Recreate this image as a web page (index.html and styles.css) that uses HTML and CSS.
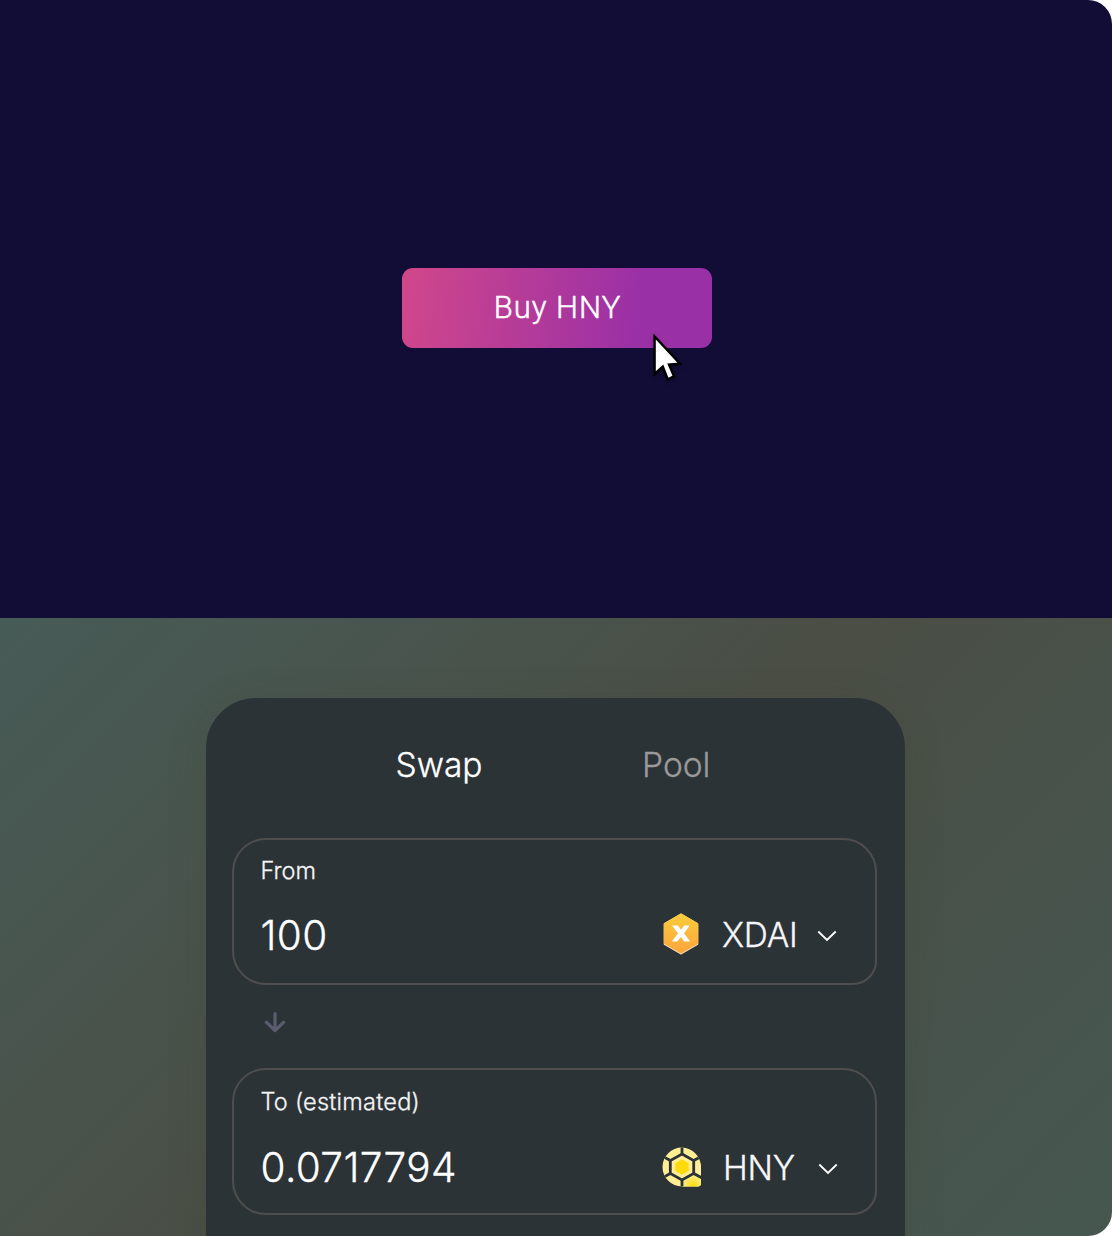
FILE: index.html
```html
<!DOCTYPE html>
<html lang="en">
<head>
<meta charset="utf-8">
<title>Buy HNY</title>
<link rel="stylesheet" href="styles.css">
</head>
<body>
<main class="frame">
  <section class="hero">
    <button class="buy">Buy HNY
      <svg class="cursor" width="36" height="54" viewBox="0 0 36 54">
        <path d="M4.600 5.500V43L12.800 35.500L17.700 48.300L24 45.400L19 33.500L30 32.800Z" fill="#fff" stroke="#000" stroke-width="2.400"/>
      </svg>
    </button>
  </section>
  <section class="exchange">
    <div class="card">
      <nav class="tabs"><span class="tab active">Swap</span><span class="tab">Pool</span></nav>
      <div class="field">
        <div class="label">From</div>
        <div class="row">
          <span class="amount">100</span>
          <span class="token">
            <svg class="logo" width="40" height="44" viewBox="0 0 40 44">
              <defs><linearGradient id="gold" x1="0" y1="0" x2="0" y2="1"><stop offset="0" stop-color="#fbcb3b"/><stop offset="1" stop-color="#fca63c"/></linearGradient></defs>
              <path d="M20 2.800L36 12V32L20 41.200L4 32V12Z" fill="#fde3c3" stroke="#fde3c3" stroke-width="2.500" stroke-linejoin="round"/>
              <path d="M20 2.800L36 12V31L20 40.200L4 31V12Z" fill="url(#gold)" stroke="url(#gold)" stroke-width="2.500" stroke-linejoin="round"/>
              <path d="M11 13.500H17L20 17.800L23.300 13.500H28.800L23 21.300L29.200 29.500H23.200L19.900 25L16.300 29.500H10.700L17 21.500Z" fill="#fff"/>
            </svg>
            <span class="symbol">XDAI</span>
            <svg class="chevron" width="20" height="12" viewBox="0 0 20 12"><path d="M1.300 1.500L10 9.900L18.700 1.500" /></svg>
          </span>
        </div>
      </div>
      <svg class="arrow" width="24" height="24" viewBox="0 0 24 24"><path d="M12 3.500V20M3.500 12.300L12 20.500L20.500 12.300"/></svg>
      <div class="field to">
        <div class="label">To (estimated)</div>
        <div class="row">
          <span class="amount">0.0717794</span>
          <span class="token">
            <svg class="logo" width="40" height="40" viewBox="0 0 40 40">
              <defs>
                <clipPath id="coin"><path d="M20 .5A19.500 19.500 0 0 1 39 20V36Q39 39.500 35.500 39.500H20A19.500 19.500 0 0 1 20 .5Z"/></clipPath>
                <radialGradient id="corner" gradientUnits="userSpaceOnUse" cx="31" cy="38" r="13"><stop offset="0" stop-color="#fddc10"/><stop offset=".4" stop-color="#fde64e"/><stop offset="1" stop-color="#fff0a0"/></radialGradient>
              </defs>
              <g clip-path="url(#coin)">
                <rect width="40" height="40" fill="#ffee93"/>
                <path d="M20 27L40 16V40H20Z" fill="url(#corner)"/>
                <path d="M20 7L31.700 13.500V26.500L20 33L8.300 26.500V13.500Z" fill="#ffee93" stroke="#2c3337" stroke-width="2.800"/>
                <path d="M20 0V7M20 33V40M31.700 13.500L40 9M31.700 26.500L40 31M8.300 13.500L0 9M8.300 26.500L0 31" stroke="#2c3337" stroke-width="2.800"/>
                <path d="M20 13.200L26 16.600V23.400L20 26.800L14 23.400V16.600Z" fill="#ffdb0d" stroke="#ffdb0d" stroke-width="1.500" stroke-linejoin="round"/>
              </g>
            </svg>
            <span class="symbol">HNY</span>
            <svg class="chevron" width="20" height="12" viewBox="0 0 20 12"><path d="M1.300 1.500L10 9.900L18.700 1.500"/></svg>
          </span>
        </div>
      </div>
    </div>
  </section>
</main>
</body>
</html>
```
FILE: styles.css
```css
* { box-sizing: border-box; }
body { margin: 0; background: #fff; font-family: Inter, "Liberation Sans", sans-serif; font-weight: 300; -webkit-text-stroke: .3px currentColor; }
.frame { width: 1112px; height: 1236px; overflow: hidden; border-radius: 0 24px 24px 0; display: flex; flex-direction: column; }
.hero { height: 618px; background: #110d37; padding: 268px 0 0 402px; }
.buy {
  position: relative; display: block; width: 310px; height: 80px; border: 0; border-radius: 11px; padding: 0 0 2px 1px;
  background: linear-gradient(97deg, #d1478a 0%, #9a30a6 76%, #9a30a6 100%);
  color: #fff; font: 300 31px Roboto, sans-serif; letter-spacing: 1px; -webkit-text-stroke: .5px #fff;
}
.cursor { position: absolute; left: 248px; top: 63px; filter: drop-shadow(0 2px 2px rgba(0, 0, 0, .25)); }
.exchange { height: 618px; padding: 80px 0 0 205.5px; background: linear-gradient(135deg, #475b56 0%, #4a4e45 50%, #465750 95%); }
.card { width: 699.500px; height: 700px; padding: 0 28px 0 26.500px; border-radius: 50px 50px 0 0; background: #2c3337; box-shadow: 0 8px 40px rgba(60, 60, 30, .16); }
.tabs { display: flex; height: 140px; padding: 47px 0 0 163.500px; gap: 159.500px; font-size: 33.500px; line-height: 41px; letter-spacing: 0; color: #9a9a9a; }
.tab.active { color: #fff; }
.field { height: 147px; border: 2px solid #4f4e4e; border-radius: 34px 34px 24px 34px; padding: 16px 38px 0 26.500px; }
.label { font-size: 23.500px; line-height: 30px; letter-spacing: 0; color: #f4f4f4; }
.row { display: flex; justify-content: space-between; align-items: center; height: 50px; margin-top: 24px; }
.amount { padding-top: 2px; font-size: 40.500px; line-height: 50px; letter-spacing: .4px; color: #fff; }
.token { display: flex; align-items: center; width: 176px; }
.logo { flex: none; margin-top: -3px; }
.symbol { padding: 0 0 1px 21px; font-size: 33.500px; letter-spacing: -.3px; color: #f6f6f8; flex: 1; }
.chevron { flex: none; margin-top: 2px; fill: none; stroke: #fff; stroke-width: 1.800; }
.arrow { display: block; margin: 25px 0 34px 30.500px; fill: none; stroke: #5b5c6d; stroke-width: 3.200; stroke-linecap: round; stroke-linejoin: round; }
.to { padding-top: 17px; padding-right: 37px; }
.to .label { letter-spacing: .25px; }
.to .row { margin-top: 25px; }
.to .logo { margin-top: 0; }
.to .symbol { padding-top: 2px; padding-bottom: 0; }
.to .chevron { margin-top: 3px; }
```
